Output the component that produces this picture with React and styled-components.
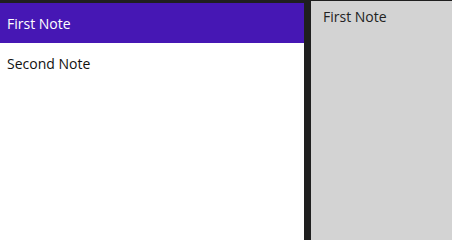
import React, { useState } from 'react'
import styled, { createGlobalStyle } from 'styled-components'

const Global = createGlobalStyle`
    html, body {
        margin: 0;
        padding: 0;
        background: #1f1f1f;
        overflow: hidden;
    }
`

const notes = ['First Note', 'Second Note']

export default function App() {
    const [selected, setSelected] = useState(0)
    return (
        <>
            <Global />
            <Shell>
                <List>
                    {notes.map((n, idx) => (
                        <Item key={idx} active={idx === selected} onClick={() => setSelected(idx)}>
                            {n}
                        </Item>
                    ))}
                </List>
                <Detail>
                    <Title>{notes[selected]}</Title>
                </Detail>
            </Shell>
        </>
    )
}

const Shell = styled.div`
    height: 100vh;
    min-height: 206px;
    box-sizing: border-box;
    padding-top: 3px;
    display: grid;
    grid-template-columns: 304px 1fr;
    column-gap: 7px;
    font-family: "Open Sans", "Noto Sans", sans-serif;
    font-size: 14px;
`

const List = styled.div`
    background: #ffffff;
    display: flex;
    flex-direction: column;
`

const Item = styled.div`
    height: 40px;
    display: flex;
    align-items: center;
    padding: 0 7px;
    background: ${props => props.active ? '#4617b4' : 'transparent'};
    color: ${props => props.active ? '#ffffff' : '#111111'};
    cursor: pointer;
`

const Detail = styled.div`
    background: #d3d3d3;
    margin-top: -2px;
    padding: 6px 12px;
`

const Title = styled.div`
    color: #222222;
    line-height: 20px;
`
